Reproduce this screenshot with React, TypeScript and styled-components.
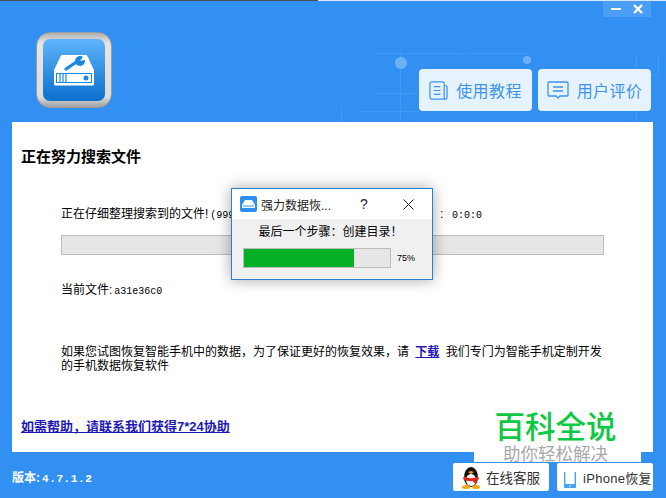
import React from "react";
import styled, { createGlobalStyle } from "styled-components";

const Global = createGlobalStyle`
  html, body { margin: 0; padding: 0; width: 666px; height: 498px; overflow: hidden; background: #3190f2; }
  * { box-sizing: border-box; }
`;

const CJK = `"Liberation Sans", "Noto Sans CJK SC", sans-serif`;

const Win = styled.div`
  position: relative;
  width: 666px;
  height: 498px;
  display: flex;
  flex-direction: column;
  background: #3190f2;
  font-family: ${CJK};
  color: #000;
  overflow: hidden;
`;

const TopEdge = styled.div`
  flex: none;
  height: 1px;
  background: linear-gradient(to right, #4a4f58 0, #4a4f58 318px, #d8e8fa 318px);
`;

const Header = styled.header`
  position: relative;
  height: 121px;
  flex: none;
  display: flex;
  align-items: flex-end;
  justify-content: space-between;
  padding: 0 15px 11px 36px;
`;

const Backdrop = styled.svg`
  position: absolute;
  left: 0;
  top: -1px;
  pointer-events: none;
`;

const WinControls = styled.div`
  position: absolute;
  right: 15px;
  top: 0;
  width: 48px;
  height: 16px;
  background: #4a9ef5;
  display: flex;
  align-items: center;
  justify-content: space-around;
  padding: 0 2px;
`;

const Logo = styled.div`
  position: relative;
  width: 76px;
  height: 76px;
  margin-bottom: 3px;
  border-radius: 14px;
  border: 1px solid #9c9c9c;
  background: linear-gradient(#b0b0b0, #e6e6e6 14%, #dedede 86%, #a0a0a0);
  padding: 6px;
`;

const LogoFace = styled.div`
  width: 62px;
  height: 62px;
  border-radius: 7px;
  background: linear-gradient(#60b4fb, #0a6fcc);
  display: flex;
  align-items: center;
  justify-content: center;
`;

const TopActions = styled.div`
  position: relative;
  display: flex;
  gap: 6px;
`;

const TopButton = styled.div`
  width: 113px;
  height: 42px;
  border-radius: 4px;
  background: #e6f3ff;
  color: #3d94ee;
  font-size: 16px;
  letter-spacing: 0.4px;
  display: flex;
  align-items: center;
  justify-content: center;
  gap: 8px;
`;

const Panel = styled.main`
  flex: none;
  height: 330px;
  margin: 0 13px 0 12px;
  background: #fff;
  padding: 25px 9px 0 9px;
  display: flex;
  flex-direction: column;
`;

const Title = styled.h1`
  margin: 0;
  font-size: 15px;
  line-height: 20px;
  font-weight: 700;
`;

const Body = styled.div`
  padding: 0 40px;
  font-size: 12px;
  line-height: 14px;
  display: flex;
  flex-direction: column;
`;

const StatusRow = styled.div`
  margin-top: 40px;
  display: flex;
  justify-content: space-between;
  white-space: nowrap;
  padding-right: 122px;
`;

const Track = styled.div`
  margin-top: 12px;
  height: 20px;
  border: 1px solid #bcbcbc;
  background: #e6e6e6;
`;

const CurrentFile = styled.div`
  margin-top: 28px;
`;

const Mono = styled.span`
  font-family: "Liberation Mono", monospace;
  font-size: 10px;
  margin-left: 2px;
`;

const Advice = styled.p`
  margin: 46px 0 0;
  line-height: 14px;
`;

const StrongLink = styled.a`
  color: #2218b4;
  font-weight: 700;
  text-decoration: underline;
  margin: 0 3px;
`;

const HelpLink = styled.a`
  margin-top: 47px;
  color: #2218b4;
  font-size: 13px;
  line-height: 14px;
  font-weight: 700;
  text-decoration: underline;
`;

const Footer = styled.footer`
  flex: 1;
  position: relative;
  display: flex;
  justify-content: space-between;
  padding: 11px 13px 7px 12px;
`;

const Version = styled.div`
  color: #fff;
  font-size: 12px;
  line-height: 28px;
  margin-top: 1px;
  font-weight: 700;
`;

const VersionNumber = styled.span`
  font-family: "Liberation Mono", monospace;
  font-size: 11px;
  letter-spacing: 0.6px;
  margin-left: 2px;
`;

const FootActions = styled.div`
  display: flex;
  gap: 8px;
`;

const FootButton = styled.div`
  width: 96px;
  height: 28px;
  border-radius: 2px;
  background: #fff;
  color: #333;
  font-size: 13.5px;
  display: flex;
  align-items: center;
  padding-left: 8px;
  gap: 5px;
  white-space: nowrap;
`;

const PhoneLabel = styled.span`
  font-size: 13px;
  letter-spacing: 0.3px;
`;

const PhoneIcon = styled.svg`
  margin: 5px 2px 0 -1px;
  flex: none;
`;

const Dialog = styled.div`
  position: absolute;
  left: 231px;
  top: 188px;
  width: 202px;
  height: 92px;
  background: #f0f0f0;
  border: 1px solid #2a7fd0;
  box-shadow: 0 0 14px rgba(0, 0, 0, 0.35);
  display: flex;
  flex-direction: column;
`;

const DialogBar = styled.div`
  height: 30px;
  background: #fff;
  display: flex;
  align-items: center;
  padding-left: 8px;
  font-size: 12px;
  color: #222;
`;

const DialogTitle = styled.span`
  margin-left: 4px;
  width: 74px;
  white-space: nowrap;
`;

const Help = styled.span`
  margin-left: 25px;
  font-size: 14px;
  width: 8px;
`;

const DialogClose = styled.svg`
  margin-left: 35px;
`;

const DialogMsg = styled.div`
  margin-top: 5px;
  text-align: center;
  font-size: 12px;
  line-height: 16px;
  padding-right: 3px;
`;

const DialogProgress = styled.div`
  margin: 8px 0 0 11px;
  display: flex;
  align-items: center;
`;

const DialogTrack = styled.div`
  width: 148px;
  height: 20px;
  border: 1px solid #bcbcbc;
  background: #e6e6e6;
`;

const DialogFill = styled.div`
  height: 100%;
  background: #06b025;
`;

const Percent = styled.span`
  margin-left: 6px;
  font-size: 9px;
`;

const Watermark = styled.div`
  position: absolute;
  left: 474px;
  top: 409px;
  width: 167px;
  height: 53px;
  background: #fff;
  display: flex;
  flex-direction: column;
  align-items: center;
  padding-right: 4px;
`;

const WmTitle = styled.div`
  font-family: "Noto Sans CJK SC", sans-serif;
  font-size: 30.5px;
  line-height: 32px;
  font-weight: 500;
  color: #0dc842;
  white-space: nowrap;
`;

const WmSub = styled.div`
  margin-top: 3px;
  font-family: "Noto Sans CJK SC", sans-serif;
  font-size: 17.5px;
  line-height: 18px;
  color: #a9a9a9;
  white-space: nowrap;
`;

export default function App() {
  return (
    <Win>
      <Global />
      <TopEdge />
      <Header>
        <Backdrop width="666" height="122" viewBox="0 0 666 122" fill="none" stroke="#429af4">
          <path d="M374 53.5h89M374 93.5h45M400.5 52v70M362 111.5h57M341.500 108v14M468 53.500h62M600 75.500h58M658.500 53v23M636.500 55v67" />
          <circle cx="401" cy="63" r="6" fill="#6cb0f6" stroke="none" />
          <circle cx="527" cy="60" r="4" fill="#6cb0f6" stroke="none" />
        </Backdrop>
        <Logo>
          <LogoFace>
            <svg width="42" height="31" viewBox="0 0 42 31">
              <path d="M9 0h24a1 1 0 0 1 1 .6L41 15v14a1.500 1.500 0 0 1-1.500 1.500h-37A1.500 1.500 0 0 1 1 29V15L8 .6A1 1 0 0 1 9 0z" fill="#fff" />
              <path d="M13 14l12-8" stroke="#1a87e4" strokeWidth="3.2" strokeLinecap="round" />
              <circle cx="27" cy="6" r="5" fill="#1a87e4" />
              <path d="M27 6l5-7 4 5z" fill="#fff" />
              <rect x="3.500" y="18.500" width="35" height="9" fill="none" stroke="#1a87e4" />
              <path d="M7 19v8M10 19v8M13 19v8" stroke="#1a87e4" strokeWidth="1.200" />
              <circle cx="33" cy="23" r="2.500" fill="#1a87e4" />
            </svg>
          </LogoFace>
        </Logo>
        <TopActions>
          <TopButton>
            <svg width="19" height="19" viewBox="0 0 20 20" fill="none" stroke="#3d94ee" strokeWidth="1.300">
              <path d="M3 1h11a2 2 0 0 1 2 2v16H3a2 2 0 0 1-2-2V3a2 2 0 0 1 2-2z" />
              <path d="M16 5h2a1 1 0 0 1 1 1v11a2 2 0 0 1-2 2h-1" />
              <path d="M5 6h7M5 10h7M5 14h7" />
            </svg>
            <span>使用教程</span>
          </TopButton>
          <TopButton>
            <svg width="22" height="18" viewBox="0 0 22 18" fill="none" stroke="#3d94ee" strokeWidth="1.300">
              <path d="M2 1h18a1 1 0 0 1 1 1v12a1 1 0 0 1-1 1h-7l-2 2-2-2H2a1 1 0 0 1-1-1V2a1 1 0 0 1 1-1z" />
              <path d="M6 6h10M6 10h10" />
            </svg>
            <span>用户评价</span>
          </TopButton>
        </TopActions>
        <WinControls>
          <svg width="12" height="12" viewBox="0 0 12 12"><path d="M1 6h10" stroke="#fff" strokeWidth="2" /></svg>
          <svg width="12" height="12" viewBox="0 0 12 12"><path d="M2 2l8 8M10 2l-8 8" stroke="#fff" strokeWidth="2.400" /></svg>
        </WinControls>
      </Header>
      <Panel>
        <Title>正在努力搜索文件</Title>
        <Body>
          <StatusRow>
            <span>正在仔细整理搜索到的文件!<Mono>(999</Mono></span>
            <span>:&nbsp;&nbsp;<Mono>0:0:0</Mono></span>
          </StatusRow>
          <Track />
          <CurrentFile>当前文件:<Mono>a31e36c0</Mono></CurrentFile>
          <Advice>
            如果您试图恢复智能手机中的数据，为了保证更好的恢复效果，请 <StrongLink>下载</StrongLink> 我们专门为智能手机定制开发的手机数据恢复软件
          </Advice>
        </Body>
        <HelpLink>如需帮助，请联系我们获得7*24协助</HelpLink>
      </Panel>
      <Footer>
        <Version>版本:<VersionNumber>4.7.1.2</VersionNumber></Version>
        <FootActions>
          <FootButton>
            <svg width="20" height="24" viewBox="0 0 20 24">
              <ellipse cx="10" cy="12" rx="7" ry="10" fill="#111" />
              <ellipse cx="10" cy="15" rx="5" ry="6" fill="#fff" />
              <path d="M3 11c4 3 10 3 14 0l1 3c-4 3-12 3-16 0z" fill="#e02a1c" />
              <path d="M13 13l3 1-1 5-3-2z" fill="#e02a1c" />
              <path d="M7 7l3-1 3 1-3 2z" fill="#f5a81c" />
              <ellipse cx="5" cy="22" rx="4" ry="2" fill="#f5a81c" />
              <ellipse cx="15" cy="22" rx="4" ry="2" fill="#f5a81c" />
            </svg>
            <span>在线客服</span>
          </FootButton>
          <FootButton>
            <PhoneIcon width="12" height="16" viewBox="0 0 12 16" fill="none">
              <path d="M.7 0v14a1 1 0 0 0 1 1h8.600a1 1 0 0 0 1-1V0" stroke="#45a4f0" strokeWidth="1.400" />
              <path d="M0 12h12v3a1 1 0 0 1-1 1H1a1 1 0 0 1-1-1z" fill="#45a4f0" />
              <circle cx="6" cy="14" r="0.800" fill="#fff" />
            </PhoneIcon>
            <PhoneLabel>iPhone恢复</PhoneLabel>
          </FootButton>
        </FootActions>
      </Footer>
      <Watermark>
        <WmTitle>百科全说</WmTitle>
        <WmSub>助你轻松解决</WmSub>
      </Watermark>
      <Dialog>
        <DialogBar>
          <svg width="17" height="16" viewBox="0 0 17 16">
            <rect width="17" height="16" rx="2" fill="#2a92ee" />
            <path d="M5 4h7l3 5v3H2V9z" fill="#fff" />
            <path d="M3 10h11" stroke="#2a92ee" strokeWidth="1" />
          </svg>
          <DialogTitle>强力数据恢...</DialogTitle>
          <Help>?</Help>
          <DialogClose width="11" height="11" viewBox="0 0 11 11"><path d="M.5.5l10 10M10.500.5l-10 10" stroke="#222" strokeWidth="1" /></DialogClose>
        </DialogBar>
        <DialogMsg>最后一个步骤：创建目录！</DialogMsg>
        <DialogProgress>
          <DialogTrack>
            <DialogFill style={{ width: "75%" }} />
          </DialogTrack>
          <Percent>75%</Percent>
        </DialogProgress>
      </Dialog>
    </Win>
  );
}
